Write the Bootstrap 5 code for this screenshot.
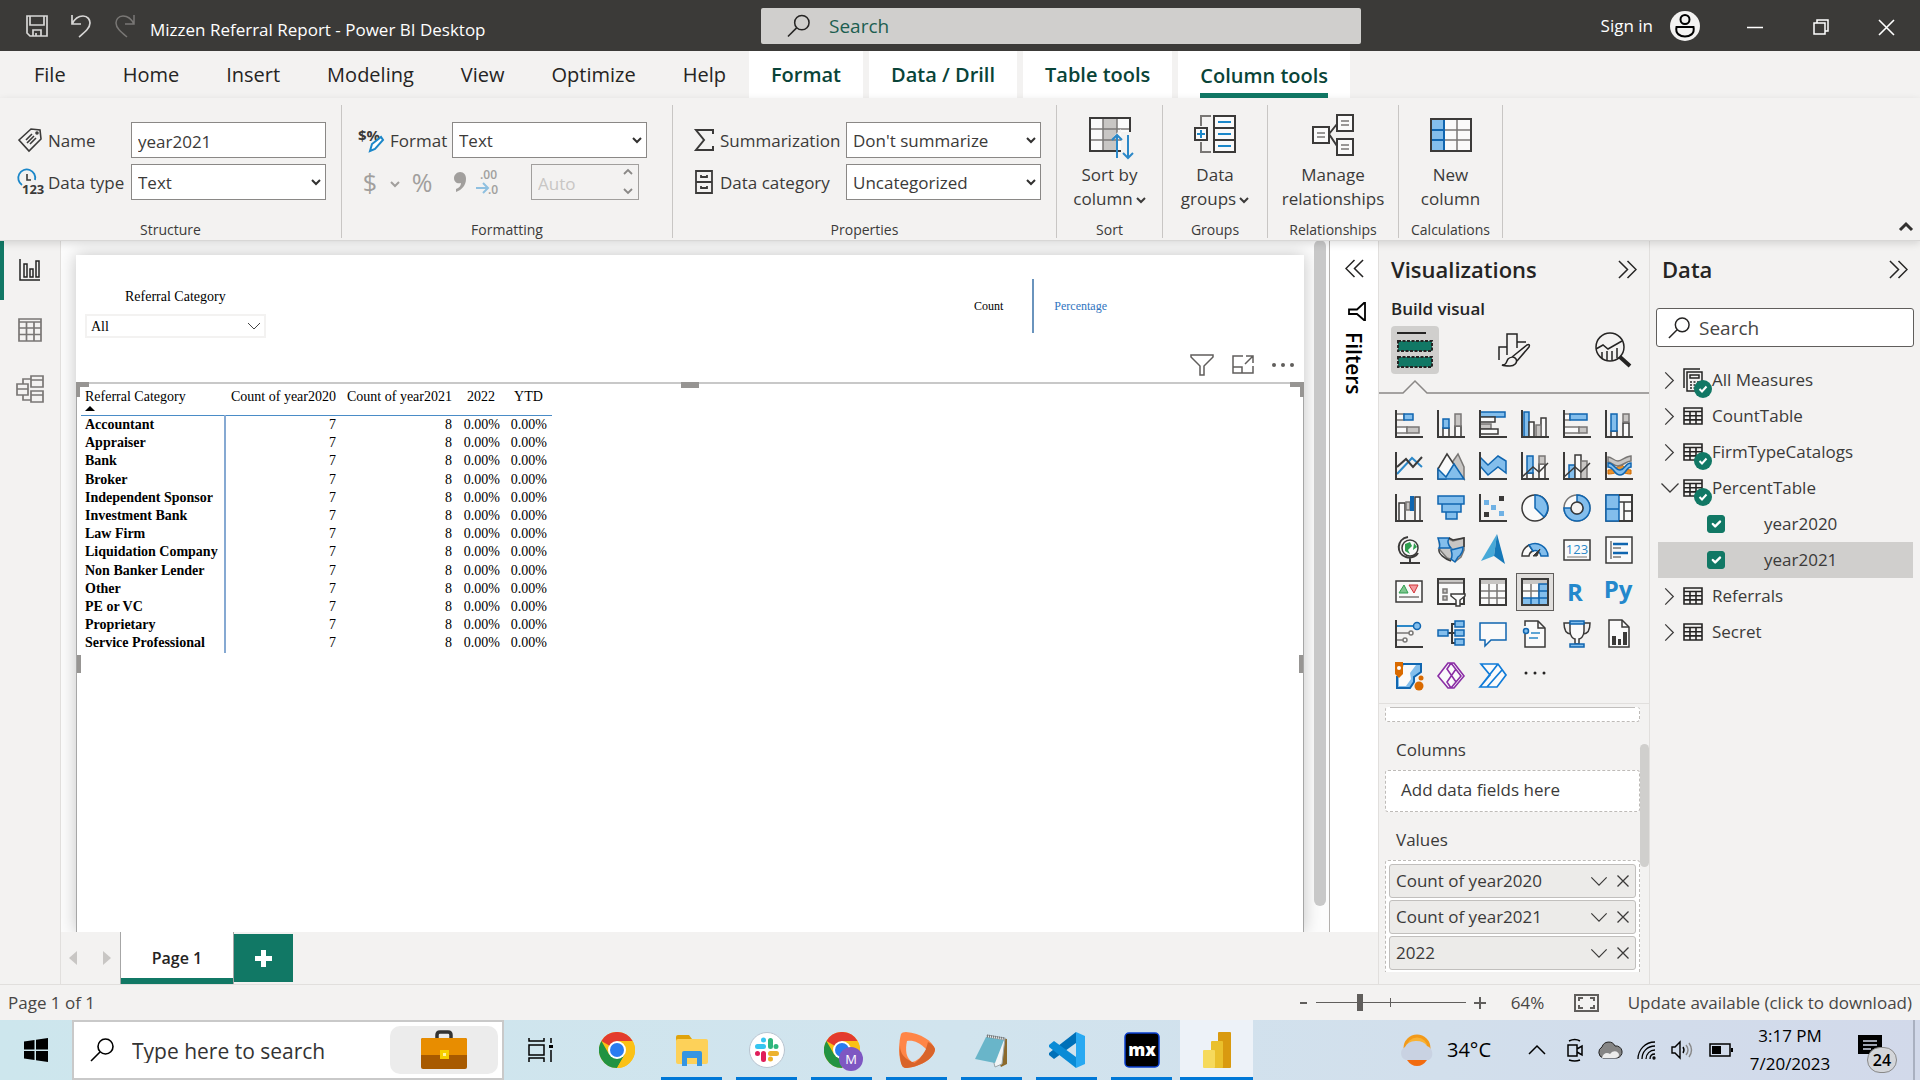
<!DOCTYPE html>
<html lang="en">
<head>
<meta charset="utf-8">
<meta name="viewport" content="width=device-width, initial-scale=1">
<title>Mizzen Referral Report - Power BI Desktop</title>
<link rel="stylesheet" href="https://cdn.jsdelivr.net/npm/bootstrap@5.3.0/dist/css/bootstrap.min.css">
<style>
:root{--ink:#252423;--soft:#3b3a39;--pane:#f3f2f1;--line:#e1dfdd;--green:#117865;--sel:#d0cfcd}
body{font-family:"Open Sans","Noto Sans",sans-serif;font-size:17px;line-height:24px;color:var(--ink);background:var(--pane)}
button,.plain{background:none;border:0;padding:0;color:inherit;font:inherit;text-decoration:none}
svg{display:block;flex:none;overflow:visible}
label{color:var(--soft)}
/* title bar */
.titlebar{height:51px;background:#3b3a38;color:#fff}
.titlebar .side{width:559px}
.title-find{width:600px;height:36px;background:var(--sel);border-radius:2px;padding-left:26px;gap:19px}
.title-find input,.pane-find input{border:0;background:none;outline:0;font-size:19px;flex:1;min-width:0;padding:1px 0 0}
.title-find input::placeholder{color:#1c5e50;opacity:1}
.winbtn{width:66px;height:51px}
/* ribbon */
.tabs{height:47px;font-size:20px}
.tabs .tab{height:47px;padding:1px 23px 0 24px;display:flex;align-items:center;color:var(--ink);text-decoration:none}
.tabs .tab:first-child{padding:1px 33px 0 34px}
.tabs .ctx{background:#fff;color:#094438;font-weight:600;padding:1px 22px 0;margin-right:6px}
.tabs .on span{box-shadow:0 5px var(--green);height:41px;padding-top:12px;align-self:flex-start}
.ribbon{height:142px;padding-top:7px;position:relative;z-index:3;background:var(--pane);box-shadow:0 1px 0 #d8d7d6,0 3px 8px rgba(0,0,0,.14)}
.group{height:133px;border-right:1px solid #c8c6c4;display:flex;flex-direction:column;justify-content:space-between;color:var(--soft)}
.group .cap{font-size:14px;line-height:16px;text-align:center}
.fieldgrid{display:grid;gap:6px;padding-top:17px;align-items:center}
.fieldgrid .cell{display:flex;align-items:center;gap:6px}
.fieldgrid label{white-space:nowrap;padding-top:1px}
.box{height:36px;border:1px solid #8a8886;border-radius:0;background-color:#fff;font-size:17px;line-height:24px;padding:6px 6px 4px;color:var(--soft);width:100%}
select.box{--bs-form-select-bg-img:url("data:image/svg+xml,%3csvg xmlns='http://www.w3.org/2000/svg' viewBox='0 0 10 10'%3e%3cpath fill='none' stroke='%23323130' stroke-width='2' d='M1 3l4 4 4-4'/%3e%3c/svg%3e");background-position:right 4px center;background-size:10px 10px}
.box:disabled{background:var(--pane);color:#c8c6c4;border-color:#a19f9d}
.big{padding-top:9px;display:flex;flex-direction:column;align-items:center;text-align:center;color:var(--soft)}
.big svg{margin-bottom:7px}
.big span svg{margin:0 0 0 3px;display:inline-block}
/* workspace */
.rail{width:61px;border-right:1px solid var(--line)}
.rail button{height:60px;width:60px;display:grid;place-items:center}
.rail button+button{height:59px}
.rail .on{box-shadow:inset 4px 0 var(--green)}
.stage{background:#fcfcfc;padding:15px 0 0 15px}
.report{background:#fff;box-shadow:0 0 16px rgba(0,0,0,.22);font-family:"Liberation Serif",serif;color:#000;font-size:14px;line-height:18px}
.gutter{width:25px;padding-left:10px}
.thumbbar{background:#c8c8c8;width:12px;height:666px;margin-top:-15px;border-radius:6px}
.slicer{width:181px;margin:33px 0 0 9px}
.slicer select{border:2px solid #f3f2f1;height:24px;border-radius:0;font-size:14px;line-height:18px;padding:2px 4px 0;background-position:right 3px center;background-size:14px 14px;--bs-form-select-bg-img:url("data:image/svg+xml,%3csvg xmlns='http://www.w3.org/2000/svg' viewBox='0 0 14 14'%3e%3cpath fill='none' stroke='%23444' d='M1 4l6 6 6-6'/%3e%3c/svg%3e");color:#000}
.switch{font-size:12px;height:54px;margin:24px 197px 0 0}
.visual{border:1px solid #a6a6a6;border-top:2px solid #c8c8c8;border-bottom:0;position:relative;padding:0 4px}
.grip{position:absolute;border:0 solid #979593}
.matrix{border-collapse:collapse;width:471px;table-layout:fixed}
.matrix th,.matrix td{padding:0 5px;text-align:right;white-space:nowrap}
.matrix thead th{font-weight:400;height:31px;vertical-align:top;padding-top:4px;border-bottom:1px solid #4a8cc7}
.matrix th:first-child{text-align:left;padding-left:4px}
.matrix tbody tr{height:18px}
.matrix tbody tr:nth-child(5n+3){height:19px}
.matrix tbody th{border-right:2px solid #86a9d2}
.matrix .mid{text-align:center}
.filters{width:49px;background:#fff;border-left:1px solid #b3b0ad}
.filters .vert{writing-mode:vertical-rl;font-weight:600;font-size:21px;line-height:24px;color:#000}
.pagetabs{height:52px}
.pagetabs .pg{width:114px;height:52px;background:#fff;border:solid #a6a6a6;border-width:0 1px;box-shadow:inset 0 -6px var(--green);font-weight:600;font-size:16px}
.pagetabs .add{width:59px;height:48px;background:var(--green);display:grid;place-items:center}
/* side panes */
.pane{border-left:1px solid var(--line)}
.pane h2{font-size:22px;line-height:30px;font-weight:600;margin:0}
.pane h3{font-size:17px;line-height:24px;font-weight:600;margin:0}
.picker{width:48px;height:48px;border-radius:4px;display:grid;place-items:center}
.picker.on{background:var(--sel)}
.vizgrid{display:grid;grid-template-columns:repeat(6,42px);grid-auto-rows:42px;padding:0 9px}
.vizgrid button{display:grid;place-items:center}
.vizgrid .on{margin:3px;outline:1px solid #605e5c;background:#e1dfdd}
.kd{fill:none;stroke:#3b3a39;stroke-width:2}
.kt{fill:none;stroke:#3b3a39;stroke-width:1.5}
.kw{fill:#fafafa;stroke:#3b3a39;stroke-width:1.5}
.kb{fill:#83beec;stroke:#1066b0;stroke-width:1.5}
.kg{fill:#c8c6c4;stroke:#797775;stroke-width:1.5}
.ko{fill:#fafafa;stroke:#797775;stroke-width:1.5}
.wells{border-top:1px solid var(--line);padding:3px 9px 0 6px;position:relative}
.wells .clip{overflow:hidden;height:265px}
.well{background:#fff;border:1px dashed #bebbb8;border-radius:3px}
.well .pill{height:34px;background:#ecebe9;border:1px solid #c1bfbd;border-radius:3px;margin:3px 3px 0;padding:0 6px;color:var(--soft)}
.well .pill+.pill{margin-top:2px}
.wells .lab{padding:16px 11px 8px;line-height:24px;color:var(--soft)}
.wells .bar{position:absolute;right:0;top:40px;width:9px;height:123px;border-radius:5px;background:var(--sel)}
.pane-find{height:39px;background:#fff;border:1px solid #605e5c;border-radius:3px;padding-left:11px;gap:9px;margin:24px 6px 15px}
.pane-find input::placeholder{color:#484644;opacity:1}
.tree{list-style:none;margin:0 7px 0 8px;padding:0;color:var(--soft)}
.tree li{height:36px;display:flex;align-items:center}
.tree button{width:25px;height:36px;padding-left:4px;display:grid;place-items:center start}
.tree .ic{width:29px}
.tree .wide{padding-left:0}
.tree .on{background:var(--sel)}
.tree .form-check-input{width:18px;height:18px;margin:0 39px 0 49px;border-radius:3px;border-color:var(--green);background-color:var(--green)}
/* status and taskbar */
.status{height:36px;border-top:1px solid var(--line);padding:0 8px;color:#484644}
.zoomer{position:relative;width:150px}
.zoomer::after{content:"";position:absolute;left:74px;top:12px;height:9px;width:1px;background:#605e5c}
.zoomer input{appearance:none;width:150px;height:17px;background:linear-gradient(#605e5c,#605e5c) center/100% 1px no-repeat;display:block;margin:8px 0}
.zoomer input::-webkit-slider-thumb{appearance:none;width:6px;height:17px;background:#605e5c}
.taskbar{height:60px;background:linear-gradient(90deg,#cde6ed,#d1e4ee 50%,#d2dfec 75%,#d2d9ea);color:#000}
.start{width:72px;height:60px;display:grid;place-items:center}
.tb-find{width:432px;background:#fff;border:2px solid #c9c9c9;padding:0 4px 0 16px;gap:18px}
.tb-find input{border:0;outline:0;font-size:21px;flex:1;min-width:0;padding:2px 0 0}
.tb-find input::placeholder{color:#333;opacity:1}
.tb-find .case{width:108px;height:48px;border-radius:10px;background:#ececec;display:grid;place-items:center}
.app{width:75px;height:60px;display:grid;place-items:center;position:relative}
.app.run::after{content:"";position:absolute;left:7px;right:7px;bottom:0;height:3px;background:#0078d7}
.app.now{background:#edf2f8;width:73px;margin-left:1px}
.app.now::after{left:0;right:0}
.tray{gap:16px}
.clock{width:84px;text-align:center;line-height:28px}
.note{position:relative}
.note b{position:absolute;left:9px;top:12px;width:30px;height:26px;border-radius:13px;background:#d4d6da;border:1px solid #888;font-weight:600;font-size:16px;line-height:24px;text-align:center}
</style>
<script src="https://cdn.jsdelivr.net/npm/bootstrap@5.3.0/dist/js/bootstrap.bundle.min.js"></script>
</head>
<body class="d-flex flex-column vh-100 overflow-hidden">
<svg width="0" height="0" class="position-absolute" aria-hidden="true">
<symbol id="find" viewBox="0 0 24 24"><g fill="none" stroke="currentColor" stroke-width="1.6"><circle cx="15.500" cy="8.500" r="7.500"/><path d="M10 14L1 23"/></g></symbol>
<symbol id="chevR" viewBox="0 0 12 20"><path d="M1.500 1.500l8.500 8.500-8.500 8.500" fill="none" stroke="currentColor" stroke-width="1.300"/></symbol>
<symbol id="chevD" viewBox="0 0 20 12"><path d="M1.500 1.500l8.500 8.500 8.500-8.500" fill="none" stroke="currentColor" stroke-width="1.300"/></symbol>
<symbol id="dbl" viewBox="0 0 20 20"><path d="M1 1l9 9-9 9M10 1l9 9-9 9" fill="none" stroke="currentColor" stroke-width="1.600"/></symbol>
<symbol id="caret" viewBox="0 0 10 10"><path d="M1 3l4 4 4-4" fill="none" stroke="currentColor" stroke-width="2"/></symbol>
<symbol id="ex" viewBox="0 0 12 12"><path d="M.5.5l11 11M11.500.5l-11 11" stroke="currentColor" stroke-width="1.300"/></symbol>
<symbol id="grid" viewBox="0 0 20 18"><path d="M1 1h18v16H1zM1 4.500h18M1 8.700h18M1 12.900h18M7 4.500V17M13 4.500V17" fill="none" stroke="#252423" stroke-width="1.600"/></symbol>
<symbol id="okay" viewBox="0 0 18 18"><circle cx="9" cy="9" r="9" fill="#117865"/><path d="M5.500 9l2.500 2.500 4.500-5" fill="none" stroke="#fff" stroke-width="2"/></symbol>
<symbol id="chrome" viewBox="0 0 36 36"><circle cx="18" cy="18" r="18" fill="#fbc116"/><path d="M18 18L2.400 9A18 18 0 0 1 33.600 9z" fill="#e33b2e"/><path d="M2.400 9A18 18 0 0 0 18 36L25.800 22.500 18 26 10.200 22.500z" fill="#229342"/><path d="M18 9h15.600A18 18 0 0 1 18 36l8-14z" fill="#fbc116"/><circle cx="18" cy="18" r="9" fill="#fff"/><circle cx="18" cy="18" r="7" fill="#2a7cf0"/></symbol>
</svg>

<header class="titlebar d-flex align-items-center">
  <div class="d-flex align-items-center flex-grow-1">
    <button aria-label="Save" style="margin-left:26px"><svg width="22" height="22" fill="none" stroke="#d8d7d6" stroke-width="1.700"><path d="M1 1h20v20H4l-3-3zM4 1v9h14V1M7 21v-6h8v6M10 18v3"/></svg></button>
    <button style="margin-left:23px" aria-label="Undo"><svg width="20" height="22" fill="none" stroke="#d8d7d6" stroke-width="1.700"><path d="M1 0v9h9M1 9C4 3 8 1 12 1c5 0 7 4 7 7 0 5-5 9-11 14"/></svg></button>
    <button style="margin-left:24px" aria-label="Redo" disabled><svg width="20" height="22" fill="none" stroke="#797775" stroke-width="1.500"><path d="M19 0v9h-9M19 9C16 3 12 1 8 1 3 1 1 5 1 8c0 5 5 9 11 14"/></svg></button>
    <span class="pt-2" style="margin-left:15px">Mizzen Referral Report - Power BI Desktop</span>
  </div>
  <div class="title-find d-flex align-items-center"><svg width="23" height="24" style="color:#252423"><use href="#find"/></svg><input type="text" placeholder="Search" aria-label="Search commands"></div>
  <div class="side d-flex align-items-center justify-content-end">
    <a class="plain text-white" href="#" style="margin-right:17px">Sign in</a>
    <svg class="me-3" width="30" height="30"><circle cx="15" cy="15" r="15" fill="#f3f2f1"/><g fill="none" stroke="#000" stroke-width="2"><circle cx="15" cy="8.500" r="4.500"/><path d="M6.500 16h17c1.500 7-4 9.500-8.500 9.500S5 23 6.500 16z"/></g></svg>
    <div class="d-flex" style="margin-left:6px">
    <button class="winbtn d-grid" aria-label="Minimize"><svg class="m-auto" width="16" height="16"><path d="M0 9.500h16" stroke="#fff" stroke-width="1.500"/></svg></button>
    <button class="winbtn d-grid" aria-label="Restore"><svg class="m-auto" width="16" height="16" fill="none" stroke="#fff" stroke-width="1.500"><path d="M1 5h11v11H1zM4 5V2h11v11h-3"/></svg></button>
    <button class="winbtn d-grid" aria-label="Close"><svg class="m-auto" width="16" height="16"><path d="M0 2l15 15M15 2L0 17" stroke="#fff" stroke-width="1.600"/></svg></button>
    </div>
  </div>
</header>

<nav class="tabs d-flex flex-shrink-0">
  <a class="tab" href="#">File</a><a class="tab" href="#">Home</a><a class="tab" href="#">Insert</a><a class="tab" href="#">Modeling</a><a class="tab" href="#">View</a><a class="tab" href="#">Optimize</a><a class="tab" href="#">Help</a>
  <a class="tab ctx" href="#">Format</a><a class="tab ctx" href="#">Data / Drill</a><a class="tab ctx" href="#">Table tools</a><a class="tab ctx on" href="#"><span>Column tools</span></a>
</nav>

<section class="ribbon d-flex flex-shrink-0">
  <div class="group" style="width:342px">
    <div class="fieldgrid" style="grid-template-columns:107px 195px;padding-left:18px">
      <div class="cell"><svg width="24" height="24" fill="none" stroke="#3b3a39" stroke-width="1.600"><path d="M1 12L13 1l9 1 1 9-12 12zM8 12l6-6M9 15l7-7M12 16l6-6"/><circle cx="19" cy="5" r="1"/></svg><label for="nm">Name</label></div>
      <input id="nm" class="box" type="text" value="year2021">
      <div class="cell"><svg width="24" height="24"><path d="M4 15A8.500 8.500 0 1 1 17 10" fill="none" stroke="#1b87c9" stroke-width="1.800"/><path d="M9 4v6h4" fill="none" stroke="#3b3a39" stroke-width="1.600"/><text x="4" y="24" font-size="13" font-weight="700" fill="#3b3a39">123</text></svg><label for="dt">Data type</label></div>
      <select id="dt" class="form-select box"><option>Text</option></select>
    </div>
    <div class="cap">Structure</div>
  </div>
  <div class="group" style="width:331px">
    <div class="fieldgrid" style="grid-template-columns:87px 195px;padding-left:17px">
      <div class="cell"><svg width="25" height="24"><text x="-1" y="13" font-size="15" font-weight="700" fill="#3b3a39">$%</text><path d="M11 23l2-7 9-7 2 3-8 9z" fill="#fff" stroke="#1b87c9" stroke-width="2"/></svg><label for="fm">Format</label></div>
      <select id="fm" class="form-select box"><option>Text</option></select>
      <div class="d-flex align-items-center" style="grid-column:1/3;color:#a19f9d;font-size:25px">
        <button disabled aria-label="Currency" style="width:22px">$</button>
        <svg width="10" height="10" style="margin:4px 6px 0 9px"><use href="#caret"/></svg>
        <button disabled aria-label="Percent" style="width:32px">%</button>
        <button disabled aria-label="Thousands" class="d-grid" style="width:28px;place-items:center end"><svg width="12" height="20"><path d="M6 0c4 0 6 3 6 7 0 6-4 11-10 13v-3c3-1 5-3 5-6-4 1-7-1-7-5 0-3 3-6 6-6z" fill="#a19f9d"/></svg></button>
        <button disabled aria-label="Decimals" style="margin-left:10px"><svg width="24" height="26"><text x="4" y="10" font-size="12" font-weight="600" fill="#a19f9d">.00</text><text x="12" y="25" font-size="12" font-weight="600" fill="#a19f9d">.0</text><path d="M0 19h11M7 14l5 5-5 5" fill="none" stroke="#8fc0e0" stroke-width="2"/></svg></button>
        <div class="position-relative ms-auto me-2" style="width:108px"><input class="box" type="text" value="Auto" disabled aria-label="Decimal places"><svg class="position-absolute end-0 top-0 me-1 mt-1" width="12" height="26" fill="none" stroke="#8a8886" stroke-width="1.800"><path d="M1 6l4-4 4 4M1 21l4 4 4-4"/></svg></div>
      </div>
    </div>
    <div class="cap">Formatting</div>
  </div>
  <div class="group" style="width:384px">
    <div class="fieldgrid" style="grid-template-columns:146px 195px;padding-left:21px">
      <div class="cell"><svg width="20" height="24" fill="none" stroke="#3b3a39" stroke-width="2"><path d="M19 6V2H2l8 10-8 10h17v-4"/></svg><label for="sm">Summarization</label></div>
      <select id="sm" class="form-select box"><option>Don't summarize</option></select>
      <div class="cell"><svg width="20" height="24" fill="none" stroke="#3b3a39" stroke-width="1.800"><path d="M2 1h16v22H2zM2 12h16M7 5v2h6V5M7 16v2h6v-2"/></svg><label for="dc">Data category</label></div>
      <select id="dc" class="form-select box"><option>Uncategorized</option></select>
    </div>
    <div class="cap">Properties</div>
  </div>
  <div class="group" style="width:106px">
    <button class="big"><svg width="42" height="42"><path class="ko" d="M1 4h40v33H1z"/><path d="M14 4h14v33H14z" fill="#c8c6c4"/><path class="ko" style="fill:none" d="M14 4v33M28 4v33M1 15h40M1 26h40"/><path class="kd" d="M1 4h40v33H1z"/><path d="M24 23l8-8v27h12V18H33z" fill="#f3f2f1"/><path d="M28 44V21M23 26l5-5 5 5M39 21v23M34 39l5 5 5-5" fill="none" stroke="#2b88c8" stroke-width="2"/></svg><span>Sort by<br>column<svg width="10" height="10"><use href="#caret"/></svg></span></button>
    <div class="cap">Sort</div>
  </div>
  <div class="group" style="width:105px">
    <button class="big"><svg width="42" height="42"><path d="M17 2H7v10M7 28v10h10" fill="none" stroke="#797775" stroke-width="2"/><path class="kd" style="fill:#fafafa" d="M20 2h21v36H20zM20 14h21M20 26h21M1 14h12v12H1z"/><path d="M24 8h13M24 20h13M24 32h13M3 20h8M7 16v8" stroke="#1b87c9" stroke-width="2"/></svg><span>Data<br>groups<svg width="10" height="10"><use href="#caret"/></svg></span></button>
    <div class="cap">Groups</div>
  </div>
  <div class="group" style="width:131px">
    <button class="big"><svg width="42" height="42"><path class="kd" style="fill:#fafafa" d="M17 20l8-10M17 20l8 12M1 13h16v16H1zM25 1h16v16H25zM25 25h16v16H25z"/><path d="M5 19h8M5 23h8M29 7h8M29 11h8M29 31h8M29 35h8" stroke="#797775" stroke-width="1.500"/></svg><span>Manage<br>relationships</span></button>
    <div class="cap">Relationships</div>
  </div>
  <div class="group" style="width:104px">
    <button class="big"><svg width="42" height="42"><path fill="#fafafa" d="M1 5h40v32H1z"/><path fill="#83beec" d="M1 5h13v32H1z"/><path d="M27 5v32M14 16h27M14 26h27" stroke="#797775" stroke-width="1.500"/><path d="M14 5v32M1 16h13M1 26h13" stroke="#1066b0" stroke-width="2"/><path class="kd" d="M1 5h40v32H1z"/></svg><span>New<br>column</span></button>
    <div class="cap">Calculations</div>
  </div>
  <button class="ms-auto align-self-end" aria-label="Collapse ribbon" style="margin:0 7px 9px 0"><svg width="14" height="10"><path d="M1 9l6-6 6 6" fill="none" stroke="#323130" stroke-width="3"/></svg></button>
</section>

<main class="d-flex flex-grow-1" style="min-height:0">
  <nav class="rail flex-shrink-0">
    <button class="on" aria-label="Report view"><svg width="22" height="22"><path class="kt" style="stroke:#252423" d="M1 0v21h20M5 5h3v13H5zM11 10h3v8h-3zM17 2h3v16h-3z"/></svg></button>
    <button aria-label="Table view"><svg width="24" height="24" fill="none" stroke="#797775" stroke-width="1.700"><path d="M1 1h22v22H1zM1 4h22M1 10h22M1 16.500h22M8.500 4v19M16 4v19"/></svg></button>
    <button aria-label="Model view"><svg width="28" height="28" fill="none" stroke="#797775" stroke-width="1.700"><path d="M15 1h12v11H15zM15 5h12M1 9h11v11H1zM1 14h11M15 16h12v11H15zM15 20h12M7 9V4h8M7 20v5h8"/></svg></button>
  </nav>
  <div class="d-flex flex-column flex-grow-1" style="min-width:0">
    <div class="d-flex flex-grow-1" style="min-height:0">
      <div class="stage d-flex flex-grow-1 overflow-hidden">
        <article class="report d-flex flex-column flex-grow-1">
          <div class="d-flex justify-content-between" style="height:92px">
            <div class="slicer"><label for="rc" class="d-block text-black" style="margin:0 0 8px 40px">Referral Category</label><select id="rc" class="form-select"><option>All</option></select></div>
            <div class="switch d-flex align-items-center"><a class="plain" href="#">Count</a><span class="h-100" style="border-left:2px solid #6a94bd;margin:0 20px 0 29px"></span><a class="plain" href="#" style="color:#2f74c0">Percentage</a></div>
          </div>
          <div class="d-flex justify-content-end align-items-center" style="height:35px;gap:18px;padding-right:10px">
            <button aria-label="Filter"><svg width="24" height="22" class="kt" style="stroke:#605e5c"><path d="M1 1h22v2l-9 9v9h-4v-9L1 3z"/></svg></button>
            <button aria-label="Focus mode"><svg width="22" height="20" class="kt" style="stroke:#605e5c"><path d="M11 1H1v17h20v-7M1 12h9v6M13 9l8-8M14 1h7v7"/></svg></button>
            <button aria-label="More"><svg width="22" height="6" fill="#605e5c"><circle cx="2" cy="3" r="2"/><circle cx="11" cy="3" r="2"/><circle cx="20" cy="3" r="2"/></svg></button>
          </div>
          <div class="visual flex-grow-1">
            <i class="grip" style="left:-1px;top:-2px;width:13px;height:15px;border-width:5px 0 0 4px"></i>
            <i class="grip" style="right:-1px;top:-2px;width:14px;height:15px;border-width:5px 4px 0 0"></i>
            <i class="grip" style="left:50%;top:-2px;width:18px;border-top-width:6px;margin-left:-9px"></i>
            <i class="grip" style="left:0;top:271px;height:18px;border-left-width:4px"></i>
            <i class="grip" style="right:0;top:271px;height:18px;border-left-width:4px"></i>
            <table class="matrix">
              <colgroup><col style="width:144px"><col style="width:116px"><col style="width:116px"><col style="width:48px"><col style="width:47px"></colgroup>
              <thead><tr><th>Referral Category<svg width="10" height="6"><path d="M0 5l5-5 5 5z"/></svg></th><th>Count of year2020</th><th>Count of year2021</th><th class="mid">2022</th><th class="mid">YTD</th></tr></thead>
              <tbody>
              <tr><th>Accountant</th><td>7</td><td>8</td><td>0.00%</td><td>0.00%</td></tr>
              <tr><th>Appraiser</th><td>7</td><td>8</td><td>0.00%</td><td>0.00%</td></tr>
              <tr><th>Bank</th><td>7</td><td>8</td><td>0.00%</td><td>0.00%</td></tr>
              <tr><th>Broker</th><td>7</td><td>8</td><td>0.00%</td><td>0.00%</td></tr>
              <tr><th>Independent Sponsor</th><td>7</td><td>8</td><td>0.00%</td><td>0.00%</td></tr>
              <tr><th>Investment Bank</th><td>7</td><td>8</td><td>0.00%</td><td>0.00%</td></tr>
              <tr><th>Law Firm</th><td>7</td><td>8</td><td>0.00%</td><td>0.00%</td></tr>
              <tr><th>Liquidation Company</th><td>7</td><td>8</td><td>0.00%</td><td>0.00%</td></tr>
              <tr><th>Non Banker Lender</th><td>7</td><td>8</td><td>0.00%</td><td>0.00%</td></tr>
              <tr><th>Other</th><td>7</td><td>8</td><td>0.00%</td><td>0.00%</td></tr>
              <tr><th>PE or VC</th><td>7</td><td>8</td><td>0.00%</td><td>0.00%</td></tr>
              <tr><th>Proprietary</th><td>7</td><td>8</td><td>0.00%</td><td>0.00%</td></tr>
              <tr><th>Service Professional</th><td>7</td><td>8</td><td>0.00%</td><td>0.00%</td></tr>
              </tbody>
            </table>
          </div>
        </article>
        <div class="gutter flex-shrink-0"><div class="thumbbar"></div></div>
      </div>
      <aside class="filters d-flex flex-column align-items-center flex-shrink-0">
        <button aria-label="Expand filters" style="margin:19px 0 24px"><svg width="19" height="19" style="transform:scaleX(-1)"><use href="#dbl"/></svg></button>
        <svg width="18" height="19" style="margin:0 0 11px 5px"><path d="M17 1v17h-1l-7-6H1V7.500h8L16 1z" fill="none" stroke="#000" stroke-width="1.800"/></svg>
        <span class="vert">Filters</span>
      </aside>
    </div>
    <nav class="pagetabs d-flex flex-shrink-0">
      <button aria-label="Previous page" style="width:26px;padding-left:8px"><svg width="8" height="14"><path d="M8 0v14L0 7z" fill="#c8c6c4"/></svg></button>
      <button aria-label="Next page" style="width:33px;padding-left:16px"><svg width="8" height="14"><path d="M0 0v14l8-7z" fill="#c8c6c4"/></svg></button>
      <button class="pg">Page 1</button>
      <button class="add mt-auto mb-auto" aria-label="New page"><svg width="17" height="17"><path d="M8.500 0v17M0 8.500h17" stroke="#fff" stroke-width="5"/></svg></button>
    </nav>
  </div>

  <aside class="pane flex-shrink-0" style="width:271px">
    <div class="d-flex align-items-center justify-content-between" style="padding:14px 12px 13px 12px"><h2>Visualizations</h2><button aria-label="Collapse"><svg width="19" height="19"><use href="#dbl"/></svg></button></div>
    <h3 style="padding-left:12px">Build visual</h3>
    <div class="d-flex justify-content-between" style="padding:5px 12px 0">
      <button class="picker on" aria-label="Build"><svg width="36" height="36"><path d="M0 1h29" stroke="#252423" stroke-width="2"/><path d="M1 9h34v10H1zM1 25h34v10H1z" fill="#117865" stroke="#252423" stroke-width="2" stroke-dasharray="3 1.500"/></svg></button>
      <button class="picker" aria-label="Format"><svg width="34" height="36" class="kt" style="stroke:#252423"><path d="M2 28V15h8v8M10 15V2h10v14M20 10h9M5 33c5 0 4-3 6-6 2-2 6-3 8 0 2 4-2 7-6 7-3 0-6 0-8-1zM15 25L30 13c2-1 3 0 2 2L20 29"/></svg></button>
      <button class="picker" aria-label="Analytics"><svg width="36" height="36" class="kt" style="stroke:#252423"><circle cx="15" cy="15" r="14"/><path d="M1 17l7-4 5 4 14-8M7 20v6M12 19v9M17 19v9M22 16v10"/><path d="M25 25l10 9" stroke-width="4"/></svg></button>
    </div>
    <svg width="100%" height="14" style="margin-top:6px"><path d="M0 13H24L36 1 48 13H270" fill="none" stroke="#8a8886" stroke-width="1.500"/></svg>
    <div class="vizgrid" style="padding-top:9px;padding-bottom:6px">
      <button aria-label="Stacked bar"><svg width="28" height="28"><path class="ko" d="M1 4h8v6H1zM1 17h11v6H1z"/><path class="kb" d="M9 4h9v6H9z"/><path class="kg" d="M12 17h12v6H12z"/><path class="kd" d="M1 0v27h27"/></svg></button>
      <button aria-label="Stacked column"><svg width="28" height="28"><path class="kw" d="M6 18h6v9H6zM18 16h6v11h-6z"/><path class="kb" d="M6 9h6v9H6z"/><path class="kg" d="M18 4h6v12h-6z"/><path class="kd" d="M1 0v27h27"/></svg></button>
      <button aria-label="Clustered bar"><svg width="28" height="28"><path class="kb" d="M1 2h25v5H1z"/><path class="kw" d="M1 7h15v5H1z"/><path class="kg" d="M1 14h11v5H1z"/><path class="kw" d="M1 19h18v5H1z"/><path class="kd" d="M1 0v27h27"/></svg></button>
      <button aria-label="Clustered column"><svg width="28" height="28"><path class="kb" d="M3 2h5v25H3z"/><path class="kw" d="M8 12h5v15H8zM20 8h5v19h-5z"/><path class="kg" d="M15 15h5v12h-5z"/><path class="kd" d="M1 0v27h27"/></svg></button>
      <button aria-label="100% bar"><svg width="28" height="28"><path class="ko" d="M1 4h6v6H1zM1 17h15v6H1z"/><path class="kb" d="M7 4h17v6H7z"/><path class="kg" d="M16 17h8v6h-8z"/><path class="kd" d="M1 0v27h27"/></svg></button>
      <button aria-label="100% column"><svg width="28" height="28"><path class="kw" d="M6 21h6v6H6zM18 13h6v14h-6z"/><path class="kb" d="M6 4h6v17H6z"/><path class="kg" d="M18 4h6v8h-6z"/><path class="kd" d="M1 0v27h27"/></svg></button>

      <button aria-label="Line"><svg width="28" height="28"><path d="M2 22L17 6l10 9" fill="none" stroke="#2b88c8" stroke-width="2"/><path class="kd" d="M2 15l9-8 7 8 9-10"/><path class="kd" d="M1 0v27h27"/></svg></button>
      <button aria-label="Area"><svg width="28" height="28"><path class="kg" d="M14 12l7-10 6 13v12z"/><path class="kw" d="M1 17L10 2l8 12-9 13H1z"/><path class="kb" d="M1 17l8 8 8-13 10 15H1z"/></svg></button>
      <button aria-label="Stacked area"><svg width="28" height="28"><path class="kb" d="M1 5l8 8 10-9 8 5v12l-8-6-10 8-8-9z"/><path class="kd" d="M1 0v27h27"/></svg></button>
      <button aria-label="Line and stacked"><svg width="28" height="28"><path class="kw" d="M6 21h6v6H6zM18 12h6v15h-6z"/><path class="kb" d="M6 4h6v17H6z"/><path class="kg" d="M18 4h6v8h-6z"/><path class="kt" d="M1 25L12 15l6 5 9-9"/><path class="kd" d="M1 0v27h27"/></svg></button>
      <button aria-label="Line and clustered"><svg width="28" height="28"><path class="kb" d="M6 13h6v14H6z"/><path class="kw" d="M12 3h6v24h-6z"/><path class="kg" d="M18 9h6v18h-6z"/><path class="kt" d="M1 25L12 15l6 5 9-9"/><path class="kd" d="M1 0v27h27"/></svg></button>
      <button aria-label="Ribbon"><svg width="28" height="28"><path d="M3 18c9 0 10-5 13-5s4 5 10 5v4c-8 0-8-3-11-3s-4 3-12 3z" fill="#e8912d" stroke="#d06a00"/><path d="M3 5c4 0 6 4 10 4s8-5 13-5v5c-5 0-8 5-13 5S7 10 3 10z" class="kg"/><path d="M3 11c6 0 7 7 12 7s5-7 11-7v4c-5 0-5 8-11 8S9 15 3 15z" class="kb"/><path class="kd" d="M1 0v27h27"/></svg></button>

      <button aria-label="Waterfall"><svg width="28" height="28"><path class="kw" d="M4 9h6v18H4zM20 3h5v24h-5z"/><path class="kg" d="M11 8h4v8h-4z"/><path d="M15 2h4v15h-4z" fill="#1066b0"/><path class="kd" d="M1 0v27h27"/></svg></button>
      <button aria-label="Funnel"><svg width="28" height="28"><path class="kb" d="M1 2h26v8H1zM5 10h19v8H5zM9 18h11v7H9z"/></svg></button>
      <button aria-label="Scatter"><svg width="28" height="28"><path d="M20 2h5v5h-5zM5 18h5v5H5z" fill="#3b3a39"/><path d="M5 6h5v5H5zM12 11h5v5h-5zM20 17h5v5h-5z" fill="#6fb1e4"/><path class="kd" d="M1 0v27h27"/></svg></button>
      <button aria-label="Pie"><svg width="28" height="28"><circle class="kw" cx="14" cy="14" r="13"/><path class="kb" d="M14 1a13 13 0 0 1 9 22l-9-9z"/></svg></button>
      <button aria-label="Donut"><svg width="28" height="28"><circle class="ko" cx="14" cy="14" r="13"/><path class="kb" d="M14 1A13 13 0 1 1 1 14h7a6 6 0 1 0 6-6z"/><circle cx="14" cy="14" r="6" fill="#f3f2f1" stroke="#3b3a39" stroke-width="1.500"/></svg></button>
      <button aria-label="Treemap"><svg width="28" height="28"><path class="kw" d="M1 1h26v26H1zM14 8h13M19 8v19M19 17h8"/><path class="kb" d="M1 1h13v14H1zM1 15h13v12H1z"/><path class="kd" d="M14 1h13v26H14"/></svg></button>

      <button aria-label="Map"><svg width="28" height="28"><circle cx="15" cy="12" r="8" class="kw"/><path d="M10 8l5-2 2 4-4 4 2 4-5-3zM19 7l3 4-4 3z" fill="#2f9e4f"/><path class="kd" d="M13 1C1 3 1 18 11 21c6 2 11-2 12-4M15 21v6M5 27h20"/></svg></button>
      <button aria-label="Filled map"><svg width="28" height="28"><path d="M2 3h10l4 2 11-3v12l-3 7-5 4-9-3-7-8z" class="kg"/><path class="kb" d="M1 2h11c-2 4-1 7 2 10H2c2-3 0-6-1-10zM14 14l12-3c0 5-2 8-5 10l-3 5-4-3c2-3 1-6 0-9z"/><path class="kt" d="M12 2l4 2 11-2v9M2 13c-1 5 6 10 12 12"/></svg></button>
      <button aria-label="Azure map"><svg width="28" height="30"><path d="M18-1L2 26l13-5z" fill="#47a9d8"/><path d="M18-1l8 30-11-8z" fill="#1578b8"/></svg></button>
      <button aria-label="Gauge"><svg width="28" height="28"><path class="kw" d="M1 20A13 13 0 0 1 8 9l4 6a6 6 0 0 0-4 5z"/><path class="kb" d="M8 9a13 13 0 0 1 19 11h-7a6 6 0 0 0-8-5z"/><path d="M19 13l-3 7h-4z" fill="#3b3a39" stroke="#3b3a39"/></svg></button>
      <button aria-label="Card"><svg width="28" height="28"><path class="kw" d="M1 4h26v20H1z"/><text x="14" y="18" text-anchor="middle" font-size="13" fill="#2b88c8">123</text><path d="M4 21h20" stroke="#797775"/></svg></button>
      <button aria-label="Multi-row card"><svg width="28" height="28"><path class="kw" d="M1 1h26v26H1z"/><path d="M6 5v18M8 12h8M8 21h8" stroke="#797775" stroke-width="1.500"/><path d="M8 8h15M8 17h15" stroke="#1066b0" stroke-width="2.500"/></svg></button>

      <button aria-label="KPI"><svg width="28" height="28"><path class="kw" d="M1 3h26v21H1z"/><path d="M9 7l4 8H4z" fill="#7fc68f" stroke="#2f9e4f"/><path d="M19 15l4-8h-9z" fill="#f59a9f" stroke="#d13438"/><path d="M4 19h20" stroke="#797775" stroke-width="1.500"/></svg></button>
      <button aria-label="Slicer"><svg width="28" height="28"><path class="kw" d="M1 1h26v25H1z"/><path class="kg" d="M1 1h26v4H1zM6 11h4v4H6zM6 18h4v4H6z"/><path class="kd" d="M1 1h26v25H1z"/><path class="kw" d="M14 16h14v2l-5 4v6h-4v-6l-5-4z"/></svg></button>
      <button aria-label="Table"><svg width="28" height="28"><path class="ko" d="M1 1h26v26H1zM10 5v22M18 5v22M1 13h26M1 20h26"/><path d="M1 1h26v5H1z" fill="#c8c6c4"/><path class="kd" d="M1 1h26v26H1z"/></svg></button>
      <button aria-label="Matrix" class="on"><svg width="28" height="28"><path class="ko" d="M1 1h26v26H1zM10 5v22M18 5v22M1 13h26"/><path d="M1 1h26v5H1z" fill="#c8c6c4"/><path class="kb" d="M18 6h9v21H1v-7h17zM18 13h9M18 20h9M10 20v7M18 20v7"/><path class="kd" d="M1 1h26v26H1z"/></svg></button>
      <button aria-label="R visual"><svg width="28" height="28"><text x="12" y="23" text-anchor="middle" font-size="24" font-weight="700" fill="#2488cc">R</text></svg></button>
      <button aria-label="Python visual"><svg width="28" height="28"><text x="13" y="20" text-anchor="middle" font-size="24" font-weight="700" fill="#2488cc">Py</text></svg></button>

      <button aria-label="Key influencers"><svg width="28" height="28"><path class="kd" d="M1 0v27h27"/><path d="M2 6h17" stroke="#2b88c8" stroke-width="2"/><circle class="kb" cx="22" cy="6" r="3.500"/><path d="M2 13h12M2 20h7" stroke="#797775" stroke-width="1.500"/><circle class="ko" cx="16" cy="13" r="2"/><circle class="ko" cx="10" cy="20" r="2"/></svg></button>
      <button aria-label="Decomposition tree"><svg width="28" height="28"><path class="kd" d="M10 13h8M18 4h-3v19h3"/><path class="kb" d="M1 10h10v6H1zM18 1h9v6h-9zM18 10h9v6h-9zM18 19h9v6h-9z"/></svg></button>
      <button aria-label="Q&amp;A"><svg width="28" height="28"><path class="kb" style="fill:#fafafa" d="M1 3h26v17H12l-6 6v-6H1z"/></svg></button>
      <button aria-label="Narrative"><svg width="28" height="28"><path class="kw" d="M4 6V1h13l7 7v19H4V14"/><path class="kt" d="M17 1v7h7"/><circle class="kb" cx="5" cy="11" r="2.500"/><path d="M10 13h9M8 18h9" stroke="#2b88c8" stroke-width="1.500"/></svg></button>
      <button aria-label="Goals"><svg width="28" height="28"><path class="kt" d="M7 3H1c0 8 3 11 7 11M21 3h6c0 8-3 11-7 11"/><path class="kw" d="M7 3h14v8c0 5-3 8-5 8v5h-4v-5c-2 0-5-3-5-8z"/><path class="kb" d="M7 1h14v3H7zM7 24h14v3H7z"/></svg></button>
      <button aria-label="Paginated report"><svg width="28" height="28"><path class="kw" d="M4 0h13l7 7v20H4z"/><path class="kt" d="M17 0v7h7"/><path d="M7 16h4v9H7zM13 19h3v6h-3zM18 12h4v13h-4z" fill="#3b3a39"/></svg></button>

      <button aria-label="ArcGIS"><svg width="28" height="28"><path d="M8 2h18v8l-7 5v5l-4 6H2V14" fill="#83beec" stroke="#1066b0" stroke-width="2"/><path d="M9 3h12l-6 8 1 6-5 7H4V14z" fill="#fafafa"/><path d="M0 0h8v12l-4 4-4-4z" fill="#d96a00"/><circle cx="4" cy="6" r="2" fill="#fff"/><circle cx="24" cy="24" r="4.500" fill="#d96a00"/><circle cx="26" cy="16" r="2.500" fill="#d96a00"/></svg></button>
      <button aria-label="Power Apps"><svg width="28" height="28" fill="#fafafa" stroke="#8a2da5" stroke-width="1.600"><path d="M11 1L1 14l10 12h3L24 14 14 1zM14 1h3l10 13-10 12h-3M14 1l-4 6 9 13 5-6M19 7l-9 13 4 6"/></svg></button>
      <button aria-label="Power Automate"><svg width="28" height="28" fill="#fafafa" stroke="#0f7bd8" stroke-width="1.700"><path d="M2 2h17l8 11-9 12H1l10-12zM1 25L19 2M8 25L23 8"/></svg></button>
      <button aria-label="More visuals"><svg width="28" height="28" fill="#252423"><circle cx="5" cy="11" r="1.500"/><circle cx="14" cy="11" r="1.500"/><circle cx="23" cy="11" r="1.500"/></svg></button>
    </div>
    <div class="wells">
      <div class="clip">
        <div class="well border-top-0 px-1" style="height:15px"><div style="border-top:1px solid #c1bfbd"></div></div>
        <div class="lab">Columns</div>
        <div class="well" style="height:42px;padding:7px 15px;color:var(--soft)">Add data fields here</div>
        <div class="lab">Values</div>
        <div class="well" style="height:160px">
          <div class="pill d-flex align-items-center"><span class="flex-grow-1">Count of year2020</span><button aria-label="Options"><svg width="18" height="11"><use href="#chevD"/></svg></button><button style="margin-left:9px" aria-label="Remove"><svg width="12" height="12"><use href="#ex"/></svg></button></div>
          <div class="pill d-flex align-items-center"><span class="flex-grow-1">Count of year2021</span><button aria-label="Options"><svg width="18" height="11"><use href="#chevD"/></svg></button><button style="margin-left:9px" aria-label="Remove"><svg width="12" height="12"><use href="#ex"/></svg></button></div>
          <div class="pill d-flex align-items-center"><span class="flex-grow-1">2022</span><button aria-label="Options"><svg width="18" height="11"><use href="#chevD"/></svg></button><button style="margin-left:9px" aria-label="Remove"><svg width="12" height="12"><use href="#ex"/></svg></button></div>
          <div class="pill"></div>
        </div>
      </div>
      <div class="bar"></div>
    </div>
  </aside>

  <aside class="pane flex-shrink-0" style="width:271px">
    <div class="d-flex align-items-center justify-content-between" style="padding:14px 12px 0 12px"><h2>Data</h2><button aria-label="Collapse"><svg width="19" height="19"><use href="#dbl"/></svg></button></div>
    <div class="pane-find d-flex align-items-center"><svg width="22" height="22"><use href="#find"/></svg><input type="text" placeholder="Search" aria-label="Search data"></div>
    <ul class="tree">
      <li><button aria-label="Expand"><svg width="15" height="19"><use href="#chevR"/></svg></button><span class="ic position-relative"><svg width="20" height="24" class="kt" style="stroke:#252423"><path d="M1 20V1h16M4 4h15v19H4zM7 7h9v3H7z"/><path d="M7 14h9M7 17h9M7 20h9" stroke-dasharray="2 1.500"/></svg><svg width="18" height="18" class="position-absolute" style="left:11px;top:12px"><use href="#okay"/></svg></span>All Measures</li>
      <li><button aria-label="Expand"><svg width="15" height="19"><use href="#chevR"/></svg></button><span class="ic"><svg width="20" height="18"><use href="#grid"/></svg></span>CountTable</li>
      <li><button aria-label="Expand"><svg width="15" height="19"><use href="#chevR"/></svg></button><span class="ic position-relative"><svg width="20" height="18"><use href="#grid"/></svg><svg width="18" height="18" class="position-absolute" style="left:11px;top:9px"><use href="#okay"/></svg></span>FirmTypeCatalogs</li>
      <li><button class="wide" aria-label="Collapse"><svg width="20" height="12" style="margin-left:2px"><use href="#chevD"/></svg></button><span class="ic position-relative"><svg width="20" height="18"><use href="#grid"/></svg><svg width="18" height="18" class="position-absolute" style="left:11px;top:9px"><use href="#okay"/></svg></span>PercentTable</li>
      <li><input class="form-check-input" type="checkbox" id="y0" checked><label for="y0">year2020</label></li>
      <li class="on"><input class="form-check-input" type="checkbox" id="y1" checked><label for="y1">year2021</label></li>
      <li><button aria-label="Expand"><svg width="15" height="19"><use href="#chevR"/></svg></button><span class="ic"><svg width="20" height="18"><use href="#grid"/></svg></span>Referrals</li>
      <li><button aria-label="Expand"><svg width="15" height="19"><use href="#chevR"/></svg></button><span class="ic"><svg width="20" height="18"><use href="#grid"/></svg></span>Secret</li>
    </ul>
  </aside>
</main>

<footer class="status d-flex align-items-center flex-shrink-0">
  <span class="me-auto">Page 1 of 1</span>
  <button aria-label="Zoom out"><svg width="8" height="12"><path d="M0 6h7" stroke="#605e5c" stroke-width="2"/></svg></button>
  <div class="zoomer ms-2"><input type="range" min="0" max="100" value="29" aria-label="Zoom"></div>
  <button class="ms-2" aria-label="Zoom in"><svg width="12" height="12"><path d="M0 6h12M6 0v12" stroke="#605e5c" stroke-width="2"/></svg></button>
  <span style="width:63px;padding-left:25px">64%</span>
  <button style="margin:0 29px 0 25px" aria-label="Fit to page"><svg width="25" height="18" fill="none" stroke="#605e5c" stroke-width="2"><path d="M1 1h23v16H1zM5 7V4h4M16 4h4v3M20 11v3h-4M9 14H5v-3"/></svg></button>
  <a class="plain" href="#">Update available (click to download)</a>
</footer>

<nav class="taskbar d-flex flex-shrink-0">
  <button class="start" aria-label="Start"><svg width="24" height="24"><path d="M0 3.500L10.500 2v9.500H0zM12 1.800L24 0v11.500H12zM0 13h10.500v9L0 20.500zM12 13h12v11l-12-1.700z"/></svg></button>
  <div class="tb-find d-flex align-items-center"><svg width="24" height="24"><use href="#find"/></svg><input type="text" placeholder="Type here to search" aria-label="Type here to search"><div class="case"><svg width="46" height="38"><path d="M16 8V4q0-3 3-3h8q3 0 3 3v4" fill="none" stroke="#333" stroke-width="3.500"/><rect y="7" width="46" height="31" rx="2" fill="#a85a00"/><path d="M0 24V9q0-2 2-2h42q2 0 2 2v15z" fill="#e88d00"/><rect x="19" y="19" width="9" height="9" fill="#f7cf00"/><path d="M22 22h3v3h-3z" fill="#fff3a0"/></svg></div></div>
  <button class="app" aria-label="Task view"><svg class="me-1" width="24" height="24" fill="none" stroke="#000" stroke-width="1.500"><path d="M1 0v3h15V0M1 24v-4h15v4M1 7h15v10H1zM23 0v5M23 12v12"/><path d="M21 7h4v3h-4z" fill="#000" stroke="none"/></svg></button>
  <button class="app" aria-label="Chrome"><svg width="36" height="36"><use href="#chrome"/></svg></button>
  <button class="app run" aria-label="File Explorer"><svg width="32" height="30"><path d="M0 2q0-2 2-2h11l3 4v6H0z" fill="#e0a30c"/><rect y="4" width="32" height="25" rx="2" fill="#fdd159"/><path d="M6 31V18q0-2 2-2h16q2 0 2 2v13h-5v-8H11v8z" fill="#3595e2"/></svg></button>
  <button class="app run" aria-label="Slack"><svg width="36" height="36" stroke-width="5" stroke-linecap="round"><circle cx="18" cy="18" r="17.500" fill="#fff" stroke="#b8c4d0" stroke-width="1"/><path d="M8.500 14.500h6M14.500 8v0" stroke="#36c5f0"/><path d="M21.500 8.500v6M27 14.500v0" stroke="#2eb67d"/><path d="M21.500 21.500h6M21.500 27v0" stroke="#ecb22e"/><path d="M14.500 21.500v6M8.500 21.500v0" stroke="#e01e5a"/></svg></button>
  <button class="app run" aria-label="Chrome profile"><svg width="36" height="36"><use href="#chrome" width="36" height="36"/><circle cx="27" cy="27" r="12" fill="#7e57c2"/><text x="27" y="32" text-anchor="middle" font-size="13" fill="#fff">M</text></svg></button>
  <button class="app run" aria-label="Workspace app"><svg width="36" height="36"><path d="M2 2Q3 0 7 0C22 1 33 9 36 17c0 8-12 17-28 19-4 0-5-2-6-5-3-9-2-22 0-29z" fill="#ff8648"/><path d="M36 17c0 8-12 17-28 19 9-5 18-12 21-26 4 2 6 4 7 7zM1 13c0 9 4 14 17 19L8 36c-4 0-5-2-6-5C1 25 0 20 1 13z" fill="#d9642a"/><path d="M8 9c6-1 12 1 19 8-4 8-9 12-14 13C7 26 6 18 8 9z" fill="#d3e3ed"/></svg></button>
  <button class="app run" aria-label="Notepad"><svg width="34" height="34"><path d="M13 3l19 3v25l-6 3z" fill="#8c6a2c"/><path d="M12 2l18 3-3 26-7 3z" fill="#f2f5f6" stroke="#9aa5aa"/><path d="M11 4l18 3-9 23L0 26z" fill="#69b5c9"/><path d="M12 3l18 3" stroke="#777" stroke-width="3" stroke-dasharray="1 1"/></svg></button>
  <button class="app run" aria-label="Code editor"><svg width="36" height="36"><path d="M27 0l9 4v28l-9 4z" fill="#29a9f2"/><path d="M27 0v11L5 27l-5-4v-2z" fill="#0070b8"/><path d="M27 36V25L5 9l-5 4v2z" fill="#0a8bd6"/></svg></button>
  <button class="app run" aria-label="Mendix"><svg width="36" height="36"><rect x="1" y="1" width="34" height="34" rx="4" fill="#000" stroke="#0a3fd0" stroke-width="1.500"/><text x="18" y="24" text-anchor="middle" font-size="17" font-weight="800" fill="#fff">mx</text></svg></button>
  <button class="app run now" aria-label="Power BI"><svg width="28" height="36"><rect x="15" width="13" height="36" rx="1" fill="#d99a10"/><rect x="8" y="9" width="12" height="27" rx="1" fill="#eac02c"/><rect y="18" width="12" height="18" rx="1" fill="#f6da5c"/></svg></button>
  <div class="tray d-flex align-items-center ms-auto">
    <svg width="36" height="32"><circle cx="18" cy="14" r="12" fill="#f9b233" stroke="#f29a1a" stroke-width="3"/><path d="M8 26h20q-4 6-10 6t-10-6z" fill="#f26b0f"/><path d="M7 26a7 7 0 0 1-1-13 12 9 0 0 1 22-1 8 8 0 0 1 2 14z" fill="#c9d2e2"/></svg>
    <span style="font-size:20px;margin:0 21px 0 -4px">34°C</span>
    <svg width="18" height="10"><path d="M1 9l8-8 8 8" fill="none" stroke="#000" stroke-width="1.500"/></svg>
    <svg class="ms-1" width="18" height="22" fill="none" stroke="#000" stroke-width="1.500"><path d="M2 6h9v11H2zM11 10l5-3v9l-5-3M3 2q6-3 11 0M3 21q6 2 11 0"/></svg>
    <svg style="margin-left:-3px" width="24" height="17"><path d="M6 16a6 6 0 0 1-1-11 7 7 0 0 1 13-1 6 6 0 0 1 2 12z" fill="#858585" stroke="#222"/><path d="M5 16c1-5 5-6 8-4 4-5 9-2 9 1 0 2-2 3-4 3z" fill="#ececec"/></svg>
    <svg width="18" height="18" fill="none" stroke="#000" stroke-width="1.300"><path d="M1 18C1 9 8 1 18 1M5 18C5 11 10 5 18 5M9 18c0-5 4-9 9-9M13 18c0-3 2-5 5-5"/><circle cx="17" cy="17" r="1"/></svg>
    <svg width="22" height="18" fill="none" stroke="#000" stroke-width="1.400"><path d="M1 6h3l5-5v16l-5-5H1zM12 6q2 3 0 6"/><path d="M15 4q4 5 0 10M18 2q5 7 0 14" stroke="#888"/></svg>
    <svg width="23" height="14"><path d="M1 1h20v12H1z" fill="none" stroke="#000" stroke-width="1.500"/><path d="M3 3h9v8H3zM22 5h2v4h-2z"/></svg>
    <div class="clock">3:17 PM<br>7/20/2023</div>
    <button class="note" style="margin:-6px 46px 0 10px" aria-label="24 notifications"><svg width="24" height="24"><path d="M0 0h24v19h-8l-5 5v-5H0z"/><path d="M5 6h14M5 10h14M5 14h8" stroke="#d2d9ea" stroke-width="1.500"/></svg><b>24</b></button>
  </div>
  <div style="width:7px;border-left:2px solid #a9b0c0;margin-left:-15px"></div>
</nav>
</body>
</html>
